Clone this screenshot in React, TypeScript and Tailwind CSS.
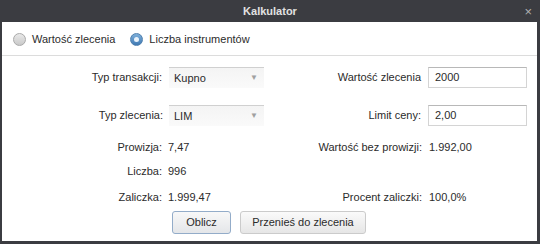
import React from "react";

const font = { fontFamily: '"Liberation Sans", Arial, sans-serif' };

const Radio: React.FC<{ checked?: boolean; label: string }> = ({ checked, label }) => (
    <label className="flex items-center gap-[6px]">
        {checked ? (
            <span className="w-[13px] h-[13px] rounded-full border border-[#4f7fae] bg-gradient-to-b from-[#7fb0da] to-[#3f79b3] flex items-center justify-center">
                <span className="w-[5px] h-[5px] rounded-full bg-[#eaf3fb]" />
            </span>
        ) : (
            <span className="w-[13px] h-[13px] rounded-full border border-[#a9a9a9] bg-gradient-to-b from-[#e9e9e9] to-[#c9c9c9]" />
        )}
        <span>{label}</span>
    </label>
);

const Select: React.FC<{ value: string }> = ({ value }) => (
    <div className="w-[95px] h-[21px] border-t border-[#d0d0d0] bg-gradient-to-b from-[#f4f4f4] to-[#fafafa] flex items-center justify-between pl-[5px] pr-[6px]">
        <span>{value}</span>
        <span className="text-[8px] text-[#a0a0a0]">▼</span>
    </div>
);

const Input: React.FC<{ value: string }> = ({ value }) => (
    <div className="w-[99px] h-[21px] border border-[#d4d4d4] border-t-[#b8b8b8] bg-white flex items-center pl-[6px]">
        {value}
    </div>
);

const App: React.FC = () => {
    return (
        <div className="w-[540px] h-[244px] bg-[#3b3c41] flex flex-col text-[11px] text-[#2b2b2b]" style={font}>
            <div className="h-[22px] relative flex items-center justify-center">
                <span className="font-bold text-[#e2e2e2] text-[11px]">Kalkulator</span>
                <span className="absolute right-[8px] top-[5px] text-[#b0b0b0] text-[13px] leading-none">×</span>
            </div>

            <div className="ml-[2px] mr-[3px] h-[219px] bg-white flex flex-col">
                <div className="h-[34px] border-b border-[#dcdcdc] flex items-center gap-[15px] pl-[11px] pt-[1px]">
                    <Radio label="Wartość zlecenia" />
                    <Radio checked label="Liczba instrumentów" />
                </div>

                <div className="flex items-center mt-[11px]">
                    <span className="w-[160px] text-right">Typ transakcji:</span>
                    <span className="ml-[7px]"><Select value="Kupno" /></span>
                    <span className="w-[157px] text-right">Wartość zlecenia</span>
                    <span className="ml-[7px]"><Input value="2000" /></span>
                </div>

                <div className="flex items-center mt-[17px]">
                    <span className="w-[161px] text-right">Typ zlecenia:</span>
                    <span className="ml-[6px]"><Select value="LIM" /></span>
                    <span className="w-[157px] text-right">Limit ceny:</span>
                    <span className="ml-[7px]"><Input value="2,00" /></span>
                </div>

                <div className="flex items-center h-[20px] mt-[11px]">
                    <span className="w-[160px] text-right">Prowizja:</span>
                    <span className="ml-[6px] w-[95px]">7,47</span>
                    <span className="w-[159px] text-right">Wartość bez prowizji:</span>
                    <span className="ml-[7px]">1.992,00</span>
                </div>

                <div className="flex items-center h-[20px] mt-[4px]">
                    <span className="w-[160px] text-right">Liczba:</span>
                    <span className="ml-[6px]">996</span>
                </div>

                <div className="flex items-center h-[20px] mt-[6px]">
                    <span className="w-[160px] text-right">Zaliczka:</span>
                    <span className="ml-[6px] w-[95px]">1.999,47</span>
                    <span className="w-[159px] text-right">Procent zaliczki:</span>
                    <span className="ml-[7px]">100,0%</span>
                </div>

                <div className="flex items-center gap-[9px] pl-[170px] mt-[4px]">
                    <button className="w-[59px] h-[23px] rounded-[3px] border border-[#93acc9] bg-gradient-to-b from-[#f8f8f8] to-[#e4e6e9] text-[#2b2b2b]">Oblicz</button>
                    <button className="w-[126px] h-[23px] rounded-[3px] border border-[#cbcbcb] bg-gradient-to-b from-[#fafafa] to-[#e6e6e6] text-[#2b2b2b]">Przenieś do zlecenia</button>
                </div>
            </div>
        </div>
    );
};

export default App;
